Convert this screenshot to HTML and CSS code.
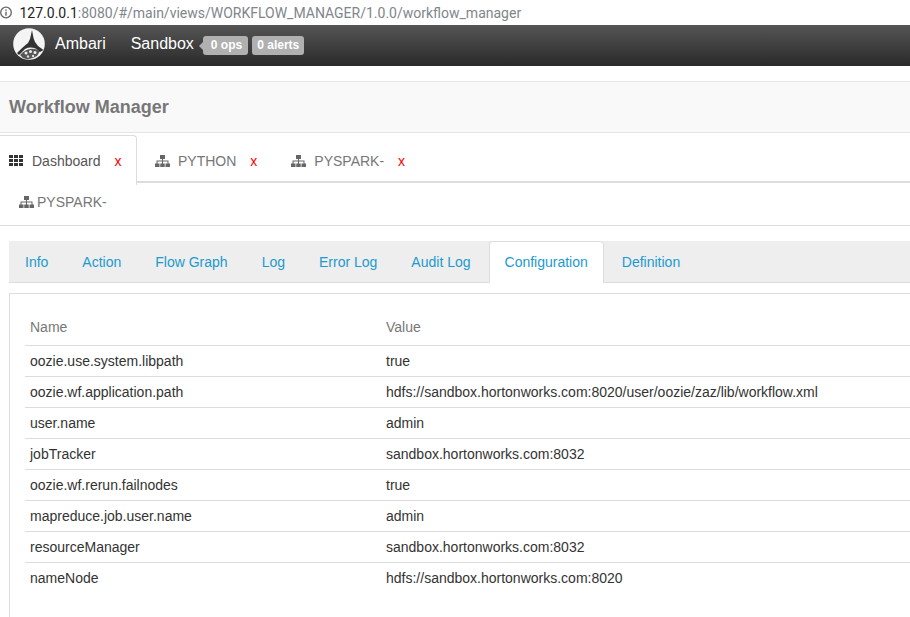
FILE: index.html
```html
<!DOCTYPE html>
<html lang="en">
<head>
<meta charset="utf-8">
<title>Workflow Manager</title>
<link rel="stylesheet" href="styles.css">
</head>
<body>
<div class="addr">
  <svg class="info" width="13" height="13" viewBox="0 0 13 13"><circle cx="6" cy="6.500" r="5.300" fill="none" stroke="#666" stroke-width="1.300"/><rect x="5.300" y="5.700" width="1.400" height="4" fill="#666"/><rect x="5.300" y="3.400" width="1.400" height="1.400" fill="#666"/></svg>
  <span class="host">127.0.0.1</span><span class="rest">:8080/#/main/views/WORKFLOW_MANAGER/1.0.0/workflow_manager</span>
</div>
<nav class="navbar">
  <svg class="logo" width="32" height="32" viewBox="0 0 32 32">
    <circle cx="16" cy="16" r="15.800" fill="#f4f4f4"/>
    <path d="M7 27 Q16 17 27 23 L24 28 Q16 33 10 30 Z" fill="#555"/>
    <path d="M19 2 L20.500 10 L22 14 L25 18 L30.500 22 L27 24 Q20 17 12 21 L6 27 L4 25 Q11 18 15 15 L17 11 Z" fill="#333"/>
    <circle cx="13" cy="25" r="1.500" fill="#eee"/><circle cx="17.500" cy="23.500" r="1.500" fill="#eee"/><circle cx="22" cy="24.500" r="1.500" fill="#eee"/>
    <circle cx="15" cy="28.500" r="1.200" fill="#ddd"/><circle cx="20" cy="28" r="1.200" fill="#ddd"/>
  </svg>
  <span class="brand">Ambari</span>
  <span class="cluster">Sandbox</span>
  <span class="badge badge-ops">0 ops</span>
  <span class="badge">0 alerts</span>
</nav>
<header class="page-head"><h1>Workflow Manager</h1></header>
<ul class="job-tabs">
  <li class="job-tab active">
    <svg class="ic" width="14" height="11" viewBox="0 0 14 11"><path fill="#333" d="M0 0h4v3H0zM5 0h4v3H5zM10 0h4v3h-4zM0 4h4v3H0zM5 4h4v3H5zM10 4h4v3h-4zM0 8h4v3H0zM5 8h4v3H5zM10 8h4v3h-4z"/></svg>
    <span class="lbl">Dashboard</span><span class="x">x</span>
  </li>
  <li class="job-tab">
    <svg class="ic" width="15" height="12" viewBox="0 0 15 12"><path fill="#666" d="M5 0h5v4H8V5.500h5.500V8.500H15V12H10.500V8.500H12.500V6.500H8V8.500H9.750V12H5.250V8.500H7V6.500H2.500V8.500H4.500V12H0V8.500H1.500V5.500H7V4H5z"/></svg>
    <span class="lbl">PYTHON</span><span class="x">x</span>
  </li>
  <li class="job-tab">
    <svg class="ic" width="15" height="12" viewBox="0 0 15 12"><path fill="#666" d="M5 0h5v4H8V5.500h5.500V8.500H15V12H10.500V8.500H12.500V6.500H8V8.500H9.750V12H5.250V8.500H7V6.500H2.500V8.500H4.500V12H0V8.500H1.500V5.500H7V4H5z"/></svg>
    <span class="lbl">PYSPARK-</span><span class="x">x</span>
  </li>
</ul>
<div class="job-title">
  <svg class="ic" width="15" height="12" viewBox="0 0 15 12"><path fill="#666" d="M5 0h5v4H8V5.500h5.500V8.500H15V12H10.500V8.500H12.500V6.500H8V8.500H9.750V12H5.250V8.500H7V6.500H2.500V8.500H4.500V12H0V8.500H1.500V5.500H7V4H5z"/></svg>
  <span>PYSPARK-</span>
</div>
<ul class="sub-tabs">
  <li>Info</li><li>Action</li><li>Flow Graph</li><li>Log</li><li>Error Log</li><li>Audit Log</li><li class="active">Configuration</li><li>Definition</li>
</ul>
<section class="panel">
  <table class="cfg">
    <thead><tr><th class="c1">Name</th><th>Value</th></tr></thead>
    <tbody>
      <tr><td>oozie.use.system.libpath</td><td>true</td></tr>
      <tr><td>oozie.wf.application.path</td><td>hdfs://sandbox.hortonworks.com:8020/user/oozie/zaz/lib/workflow.xml</td></tr>
      <tr><td>user.name</td><td>admin</td></tr>
      <tr><td>jobTracker</td><td>sandbox.hortonworks.com:8032</td></tr>
      <tr><td>oozie.wf.rerun.failnodes</td><td>true</td></tr>
      <tr><td>mapreduce.job.user.name</td><td>admin</td></tr>
      <tr><td>resourceManager</td><td>sandbox.hortonworks.com:8032</td></tr>
      <tr><td>nameNode</td><td>hdfs://sandbox.hortonworks.com:8020</td></tr>
    </tbody>
  </table>
</section>
</body>
</html>
```
FILE: styles.css
```css
* { box-sizing: border-box; }
html, body { margin: 0; height: 617px; overflow: hidden; background: #fff; }
body { font-family: "Liberation Sans", Arial, sans-serif; font-size: 14px; color: #333; }
ul { list-style: none; margin: 0; padding: 0; }

.addr { height: 25px; display: flex; align-items: center; font-family: Roboto, "Noto Sans", sans-serif; font-size: 14px; background: #fff; }
.info { margin: 0 6.500px 0 0; flex: none; }
.host { color: #222; }
.rest { color: #80868b; }

.navbar { height: 41px; display: flex; align-items: center; background: linear-gradient(#555, #2a2a2a); color: #fff; padding-left: 13px; }
.logo { flex: none; margin-top: -3px; }
.brand { font-size: 16px; margin-left: 10px; margin-top: -4px; }
.cluster { font-size: 16px; margin-left: 25px; margin-right: 9px; margin-top: -4px; }
.badge { background: #b0b0b0; color: #fff; font-size: 12px; font-weight: 700; height: 19px; line-height: 19px; padding: 0 5px; border-radius: 3px; margin-right: 4px; margin-top: -1px; }
.badge-ops { position: relative; padding: 0 6px 0 8px; }
.badge-ops::before { content: ""; position: absolute; left: -4px; top: 6px; border: 4px solid transparent; border-left: 0; border-right-color: #b0b0b0; }

.page-head { margin-top: 15px; height: 52px; background: #f9f9f9; border-top: 1px solid #e8e8e8; border-bottom: 1px solid #e5e5e5; display: flex; align-items: center; padding-left: 9px; }
.page-head h1 { margin: 0; font-size: 18px; font-weight: 700; color: #777; }

.job-tabs { display: flex; height: 50px; padding-top: 2px; border-bottom: 2px solid #ddd; }
.job-tab { display: flex; align-items: center; height: 48px; color: #777; padding: 3px 0 0 18px; }
.job-tab .ic { margin-right: 8px; }
.job-tab .x { color: #f00; margin-left: 14px; margin-right: 16px; }
.job-tab.active { width: 137px; padding: 0 0 0 9px; color: #555; background: #fff; border: 1px solid #ddd; border-left: 0; border-bottom: 0; border-radius: 0 4px 0 0; margin-bottom: -2px; height: 50px; }
.job-tab.active .ic { margin-right: 9px; }
.job-tab.active .x { margin-right: 0; }

.job-title { height: 43px; border-bottom: 1px solid #ddd; display: flex; align-items: center; padding: 0 0 5px 19px; color: #777; }
.job-title .ic { margin-right: 3px; }

.sub-tabs { display: flex; margin: 15px 0 0 9px; height: 42px; background: #eee; border-bottom: 1px solid #ddd; }
.sub-tabs li { color: #1c9ad0; height: 42px; padding: 13px 16px 0; margin-right: 2px; line-height: 16px; }
.sub-tabs li.active { background: #fff; border: 1px solid #ddd; border-bottom: 0; border-radius: 4px 4px 0 0; padding: 12px 15px 0; }

.panel { margin: 10px 0 0 9px; border: 1px solid #ddd; border-right: 0; border-bottom: 0; height: 340px; padding: 15px 0 0 15px; }
.cfg { width: 100%; border-collapse: collapse; table-layout: fixed; }
.cfg th, .cfg td { text-align: left; padding: 0 5px; font-weight: 400; }
.cfg th { color: #777; height: 36px; border-bottom: 1px solid #ddd; }
.cfg th.c1 { width: 356px; }
.cfg td { height: 31px; border-bottom: 1px solid #ddd; color: #333; }
.cfg tbody tr:last-child td { border-bottom: 0; }
```
